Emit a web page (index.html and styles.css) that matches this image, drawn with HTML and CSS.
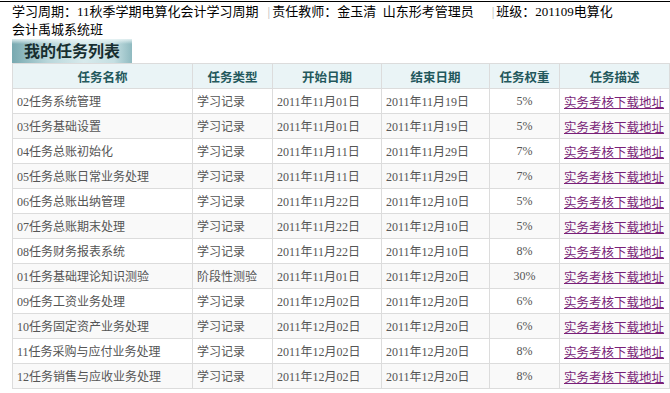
FILE: index.html
```html
<!DOCTYPE html>
<html>
<head>
<meta charset="utf-8">
<link rel="stylesheet" href="styles.css">
</head>
<body>
<div class="page">
  <div class="info"><div class="line">学习周期：11秋季学期电算化会计学习周期<span class="sep">|</span>责任教师：金玉清&nbsp; 山东形考管理员<span class="sep wide">|</span>班级：201109电算化</div><div class="line">会计禹城系统班</div></div>
  <div class="tab">我的任务列表</div>
  <table class="tasks">
    <colgroup>
      <col class="c1"><col class="c2"><col class="c3"><col class="c4"><col class="c5"><col class="c6">
    </colgroup>
    <thead>
      <tr><th>任务名称</th><th>任务类型</th><th>开始日期</th><th>结束日期</th><th>任务权重</th><th>任务描述</th></tr>
    </thead>
    <tbody>
      <tr><td>02任务系统管理</td><td>学习记录</td><td>2011年11月01日</td><td>2011年11月19日</td><td class="pct">5%</td><td><a href="#">实务考核下载地址</a></td></tr>
      <tr><td>03任务基础设置</td><td>学习记录</td><td>2011年11月01日</td><td>2011年11月19日</td><td class="pct">5%</td><td><a href="#">实务考核下载地址</a></td></tr>
      <tr><td>04任务总账初始化</td><td>学习记录</td><td>2011年11月11日</td><td>2011年11月29日</td><td class="pct">7%</td><td><a href="#">实务考核下载地址</a></td></tr>
      <tr><td>05任务总账日常业务处理</td><td>学习记录</td><td>2011年11月11日</td><td>2011年11月29日</td><td class="pct">7%</td><td><a href="#">实务考核下载地址</a></td></tr>
      <tr><td>06任务总账出纳管理</td><td>学习记录</td><td>2011年11月22日</td><td>2011年12月10日</td><td class="pct">5%</td><td><a href="#">实务考核下载地址</a></td></tr>
      <tr><td>07任务总账期末处理</td><td>学习记录</td><td>2011年11月22日</td><td>2011年12月10日</td><td class="pct">5%</td><td><a href="#">实务考核下载地址</a></td></tr>
      <tr><td>08任务财务报表系统</td><td>学习记录</td><td>2011年11月22日</td><td>2011年12月10日</td><td class="pct">8%</td><td><a href="#">实务考核下载地址</a></td></tr>
      <tr><td>01任务基础理论知识测验</td><td>阶段性测验</td><td>2011年11月01日</td><td>2011年12月20日</td><td class="pct">30%</td><td><a href="#">实务考核下载地址</a></td></tr>
      <tr><td>09任务工资业务处理</td><td>学习记录</td><td>2011年12月02日</td><td>2011年12月20日</td><td class="pct">6%</td><td><a href="#">实务考核下载地址</a></td></tr>
      <tr><td>10任务固定资产业务处理</td><td>学习记录</td><td>2011年12月02日</td><td>2011年12月20日</td><td class="pct">6%</td><td><a href="#">实务考核下载地址</a></td></tr>
      <tr><td>11任务采购与应付业务处理</td><td>学习记录</td><td>2011年12月02日</td><td>2011年12月20日</td><td class="pct">8%</td><td><a href="#">实务考核下载地址</a></td></tr>
      <tr><td>12任务销售与应收业务处理</td><td>学习记录</td><td>2011年12月02日</td><td>2011年12月20日</td><td class="pct">8%</td><td><a href="#">实务考核下载地址</a></td></tr>
    </tbody>
  </table>
</div>
</body>
</html>
```

FILE: styles.css
```css
html, body {
  margin: 0;
  padding: 0;
  background: #ffffff;
}
body {
  font-family: "Liberation Serif", "Noto Sans CJK SC", serif;
}
.page {
  margin-top: 1px;
  border-top: 1px solid #000000;
  padding: 1px 1px 0 12px;
}
.info {
  font-size: 13px;
  line-height: 18px;
  color: #000000;
}
.line {
  white-space: nowrap;
}
.sep {
  color: #b4b4b4;
  margin: 0 2px 0 9px;
}
.sep.wide {
  margin-left: 18px;
}
.tab {
  width: 120px;
  height: 24px;
  line-height: 25px;
  text-align: center;
  font-size: 16px;
  font-weight: bold;
  color: #172e30;
  background:
    linear-gradient(to bottom, rgba(235,245,246,0.9) 0px, rgba(235,245,246,0) 5px),
    linear-gradient(to right, #78a9b0 0%, #b9d7db 30%, #d8eaec 60%, #c5dfe2 85%, #8fbac0 100%);
}
.tasks {
  border-collapse: collapse;
  table-layout: fixed;
  width: 657px;
  font-size: 12px;
}
.c1 { width: 180px; }
.c2 { width: 80px; }
.c3 { width: 109px; }
.c4 { width: 108px; }
.c5 { width: 70px; }
.c6 { width: 110px; }
.tasks th, .tasks td {
  border: 1px solid #dcdcdc;
  height: 24px;
  padding: 0 4px;
  white-space: nowrap;
  overflow: hidden;
}
.tasks th {
  background: #eaf4f6;
  color: #23585c;
  font-weight: bold;
  font-size: 12.5px;
  text-align: center;
}
.tasks td {
  color: #555555;
  text-align: left;
}
.tasks td.pct {
  text-align: center;
}
.tasks tbody tr:nth-child(even) td {
  background: #f9f9f9;
}
.tasks a {
  color: #7a1f78;
  text-decoration: underline;
  font-size: 12.5px;
}
```
